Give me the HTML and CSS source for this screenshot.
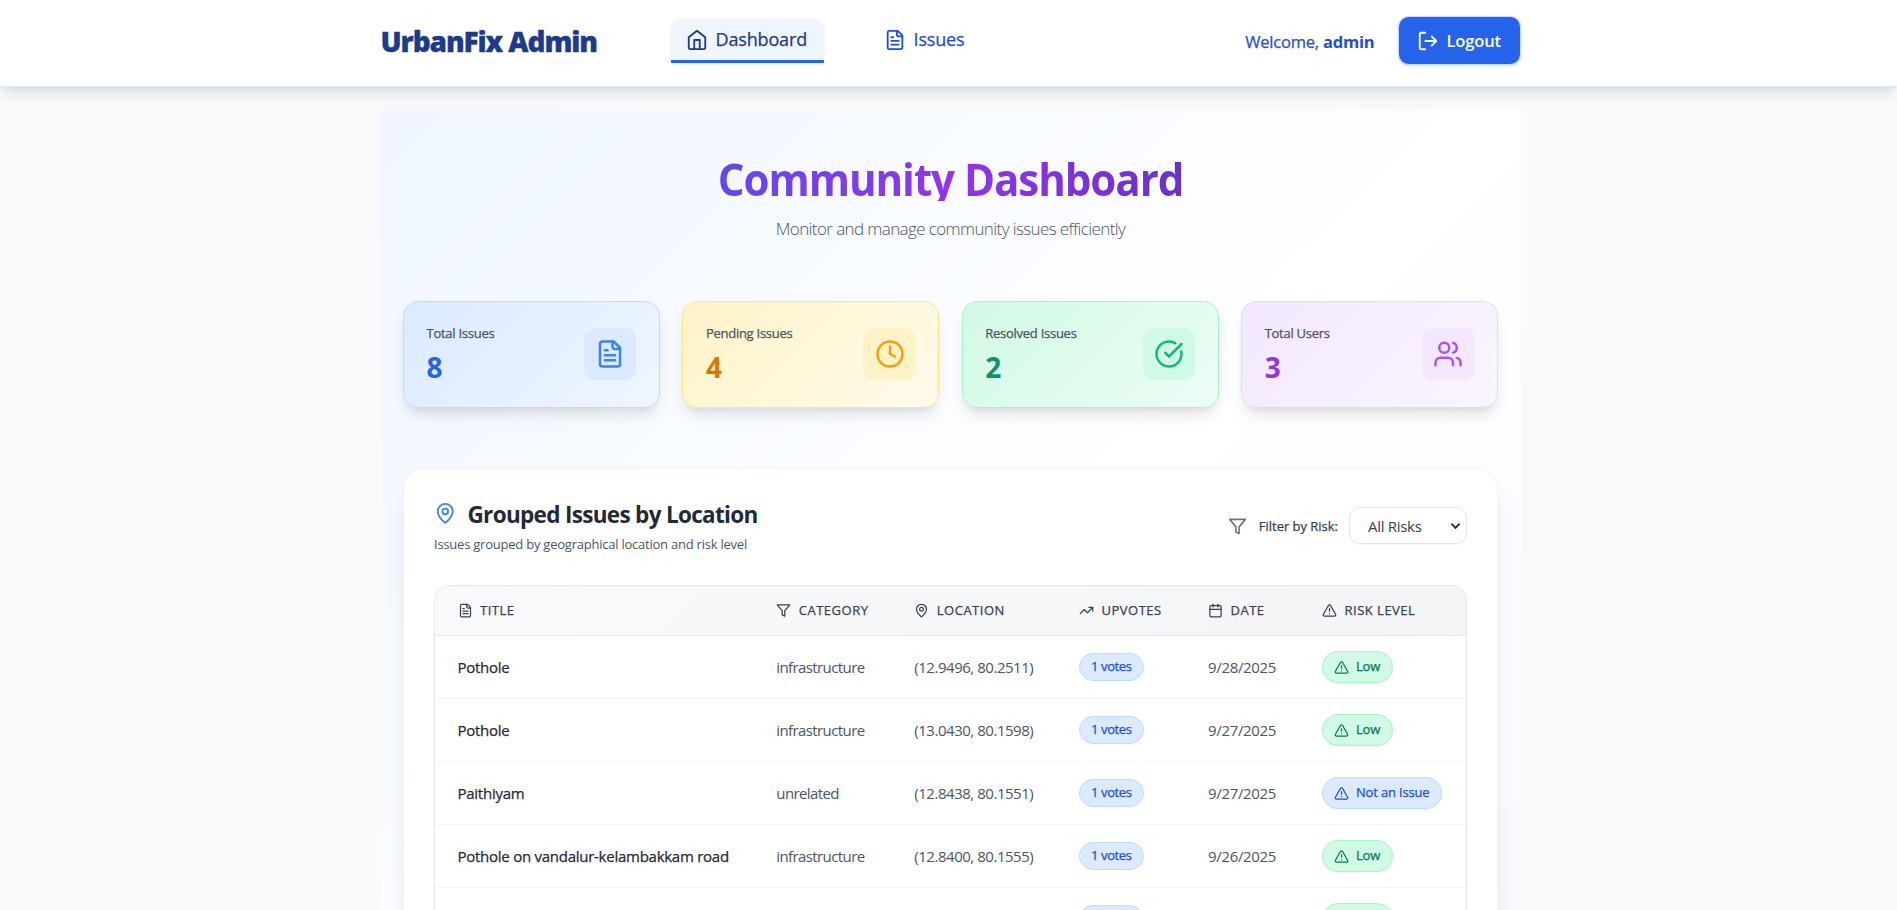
FILE: index.html
```html
<!DOCTYPE html>
<html lang="en">
<head>
<meta charset="utf-8">
<title>UrbanFix Admin</title>
<link rel="stylesheet" href="styles.css">
</head>
<body>
<svg class="defs" aria-hidden="true">
  <symbol id="file" viewBox="0 0 24 24"><path d="M15 2H6a2 2 0 0 0-2 2v16a2 2 0 0 0 2 2h12a2 2 0 0 0 2-2V7Z"/><path d="M14 2v4a2 2 0 0 0 2 2h4"/><path d="M10 9H8"/><path d="M16 13H8"/><path d="M16 17H8"/></symbol>
  <symbol id="home" viewBox="0 0 24 24"><path d="m3 9 9-7 9 7v11a2 2 0 0 1-2 2H5a2 2 0 0 1-2-2z"/><path d="M9 22V12h6v10"/></symbol>
  <symbol id="logout" viewBox="0 0 24 24"><path d="M9 21H5a2 2 0 0 1-2-2V5a2 2 0 0 1 2-2h4"/><path d="m16 17 5-5-5-5"/><path d="M21 12H9"/></symbol>
  <symbol id="clock" viewBox="0 0 24 24"><circle cx="12" cy="12" r="10"/><path d="M12 6v6l4 2"/></symbol>
  <symbol id="check" viewBox="0 0 24 24"><path d="M21.8 10A10 10 0 1 1 17 3.34"/><path d="m9 11 3 3L22 4"/></symbol>
  <symbol id="users" viewBox="0 0 24 24"><path d="M16 21v-2a4 4 0 0 0-4-4H6a4 4 0 0 0-4 4v2"/><circle cx="9" cy="7" r="4"/><path d="M22 21v-2a4 4 0 0 0-3-3.87"/><path d="M16 3.13a4 4 0 0 1 0 7.75"/></symbol>
  <symbol id="pin" viewBox="0 0 24 24"><path d="M20 10c0 5-5.54 10.19-7.4 11.8a1 1 0 0 1-1.2 0C9.54 20.19 4 15 4 10a8 8 0 0 1 16 0"/><circle cx="12" cy="10" r="3"/></symbol>
  <symbol id="filter" viewBox="0 0 24 24"><path d="M22 3H2l8 9.46V19l4 2v-8.54z"/></symbol>
  <symbol id="trend" viewBox="0 0 24 24"><path d="m22 7-8.5 8.5-5-5L2 17"/><path d="M16 7h6v6"/></symbol>
  <symbol id="calendar" viewBox="0 0 24 24"><path d="M8 2v4"/><path d="M16 2v4"/><rect x="3" y="4" width="18" height="18" rx="2"/><path d="M3 10h18"/></symbol>
  <symbol id="alert" viewBox="0 0 24 24"><path d="m21.73 18-8-14a2 2 0 0 0-3.48 0l-8 14A2 2 0 0 0 4 21h16a2 2 0 0 0 1.73-3"/><path d="M12 9v4"/><path d="M12 17h.01"/></symbol>
</svg>

<header class="topbar">
  <div class="topbar-inner">
    <span class="brand">UrbanFix Admin</span>
    <nav class="nav">
      <a class="tab active"><svg class="icon"><use href="#home"/></svg>Dashboard</a>
      <a class="tab"><svg class="icon"><use href="#file"/></svg>Issues</a>
    </nav>
    <div class="account">
      <span class="welcome">Welcome, <b>admin</b></span>
      <button class="logout"><svg class="icon"><use href="#logout"/></svg>Logout</button>
    </div>
  </div>
</header>

<main class="page">
  <h1 class="title">Community Dashboard</h1>
  <p class="subtitle">Monitor and manage community issues efficiently</p>

  <section class="stats">
    <div class="stat blue"><div><p class="label">Total Issues</p><p class="value">8</p></div><div class="badge"><svg class="icon"><use href="#file"/></svg></div></div>
    <div class="stat amber"><div><p class="label">Pending Issues</p><p class="value">4</p></div><div class="badge"><svg class="icon"><use href="#clock"/></svg></div></div>
    <div class="stat green"><div><p class="label">Resolved Issues</p><p class="value">2</p></div><div class="badge"><svg class="icon"><use href="#check"/></svg></div></div>
    <div class="stat purple"><div><p class="label">Total Users</p><p class="value">3</p></div><div class="badge"><svg class="icon"><use href="#users"/></svg></div></div>
  </section>

  <section class="panel">
    <div class="panel-head">
      <div>
        <h2 class="panel-title"><svg class="icon"><use href="#pin"/></svg>Grouped Issues by Location</h2>
        <p class="panel-sub">Issues grouped by geographical location and risk level</p>
      </div>
      <div class="filter">
        <svg class="icon"><use href="#filter"/></svg>
        <span class="filter-label">Filter by Risk:</span>
        <div class="select"><span>All Risks</span><svg class="chevron" viewBox="0 0 12 8"><path d="M1.500 1.500 6 6l4.500-4.500"/></svg></div>
      </div>
    </div>
    <div class="table">
      <div class="row head">
        <div><svg class="icon"><use href="#file"/></svg>Title</div>
        <div><svg class="icon"><use href="#filter"/></svg>Category</div>
        <div><svg class="icon"><use href="#pin"/></svg>Location</div>
        <div><svg class="icon"><use href="#trend"/></svg>Upvotes</div>
        <div><svg class="icon"><use href="#calendar"/></svg>Date</div>
        <div><svg class="icon"><use href="#alert"/></svg>Risk Level</div>
      </div>
      <div class="row"><div class="name">Pothole</div><div class="category">infrastructure</div><div class="coords">(12.9496, 80.2511)</div><div><span class="votes">1 votes</span></div><div class="date">9/28/2025</div><div><span class="risk low"><svg class="icon"><use href="#alert"/></svg>Low</span></div></div>
      <div class="row"><div class="name">Pothole</div><div class="category">infrastructure</div><div class="coords">(13.0430, 80.1598)</div><div><span class="votes">1 votes</span></div><div class="date">9/27/2025</div><div><span class="risk low"><svg class="icon"><use href="#alert"/></svg>Low</span></div></div>
      <div class="row"><div class="name">Paithiyam</div><div class="category">unrelated</div><div class="coords">(12.8438, 80.1551)</div><div><span class="votes">1 votes</span></div><div class="date">9/27/2025</div><div><span class="risk none"><svg class="icon"><use href="#alert"/></svg>Not an Issue</span></div></div>
      <div class="row"><div class="name">Pothole on vandalur-kelambakkam road</div><div class="category">infrastructure</div><div class="coords">(12.8400, 80.1555)</div><div><span class="votes">1 votes</span></div><div class="date">9/26/2025</div><div><span class="risk low"><svg class="icon"><use href="#alert"/></svg>Low</span></div></div>
      <div class="row"><div></div><div></div><div></div><div><span class="votes blank"></span></div><div></div><div><span class="risk low blank"></span></div></div>
    </div>
  </section>
</main>
</body>
</html>
```
FILE: styles.css
```css
* { box-sizing: border-box; margin: 0; padding: 0; }
html { font-size: 15px; }
body {
  height: 100vh;
  overflow: hidden;
  padding-left: 4px;
  background: #f8fafc;
  color: #4b5563;
  font-family: "Open Sans", "Noto Sans", sans-serif;
  line-height: 1.5;
}
.defs { position: absolute; width: 0; height: 0; }
.icon { flex: none; fill: none; stroke: currentColor; stroke-width: 2; stroke-linecap: round; stroke-linejoin: round; }

/* Medium weight: regular glyphs slightly thickened */
.tab, .welcome, .label, .filter-label, .head, .name, .votes, .risk { -webkit-text-stroke: .25px currentColor; }
.welcome b { -webkit-text-stroke: 0; }

.topbar {
  position: relative;
  z-index: 2;
  height: 87px;
  margin-left: -4px;
  padding: 16px 0 0 4px;
  background: #fff;
  border-bottom: 1px solid #dbeafe;
  box-shadow: 0 10px 15px -3px rgba(0,0,0,.1), 0 4px 6px -4px rgba(0,0,0,.1);
}
.topbar-inner { display: flex; align-items: center; width: 1140px; height: 50px; margin: 0 auto; }
.brand { width: 290px; font-size: 28px; font-weight: 800; letter-spacing: -1.1px; color: #1e3a8a; white-space: nowrap; -webkit-text-stroke: .3px currentColor; }
.nav { display: flex; gap: 45px; }
.tab { display: flex; align-items: center; gap: 8px; width: 153px; height: 44px; padding: 0 15px; font-size: 18px; letter-spacing: -.15px; color: #1d4ed8; border-bottom: 3px solid transparent; border-radius: 11px 11px 0 0; }
.tab .icon { width: 22px; height: 22px; }
.tab.active { color: #1e3a8a; background: #eff6ff; border-bottom-color: #2563eb; box-shadow: 0 1px 3px rgba(0,0,0,.1); }
.account { display: flex; align-items: center; gap: 23px; margin-left: auto; }
.welcome { padding-top: 2px; font-size: 16.500px; letter-spacing: -.2px; color: #1d4ed8; white-space: nowrap; }
.welcome b { font-weight: 700; }
.logout { display: flex; align-items: center; gap: 8px; width: 123px; height: 49px; margin-top: -1px; padding: 0 18px; border: 1px solid #bfdbfe; border-radius: 11px; background: #2563eb; color: #fff; font: 600 16.500px "Open Sans", sans-serif; letter-spacing: -.15px; box-shadow: 0 1px 3px rgba(0,0,0,.15); }
.logout .icon { width: 22px; height: 22px; }

.page { width: 1140px; height: 1110px; margin: 23px auto 0; padding: 46px 22.500px 0; background: linear-gradient(135deg, #eff6ff 0%, #fff 50%, #faf5ff 100%); }
.title { height: 45px; font-size: 44.500px; line-height: 45px; font-weight: 700; letter-spacing: -1.1px; text-align: center; background: linear-gradient(90deg, #2563eb, #9333ea, #3730a3); -webkit-background-clip: text; background-clip: text; color: transparent; transform: scaleX(.945); }
.subtitle { margin-top: 14px; font-size: 17px; line-height: 28px; font-weight: 300; letter-spacing: -.6px; text-align: center; color: #4b5563; }

.stats { display: grid; grid-template-columns: repeat(4, 1fr); gap: 22.500px; margin-top: 58px; }
.stat { display: flex; justify-content: space-between; align-items: center; height: 107px; padding: 0 22.500px 1px; border: 1px solid; border-radius: 15px; box-shadow: 0 10px 15px -3px rgba(0,0,0,.1), 0 4px 6px -4px rgba(0,0,0,.1); }
.label { font-size: 13px; line-height: 19px; letter-spacing: -.26px; color: #4b5563; }
.value { margin-top: 7px; font-size: 28px; line-height: 34px; font-weight: 700; }
.badge { display: grid; place-items: center; width: 52.500px; height: 52.500px; border-radius: 11px; }
.badge .icon { width: 30px; height: 30px; }
.blue { background: linear-gradient(135deg, #dbeafe, #eff6ff); border-color: #bfdbfe; }
.blue .value { color: #2563eb; }
.blue .badge { background: #dbeafe; color: #3b82f6; }
.amber { background: linear-gradient(135deg, #fef3c7, #fffbeb); border-color: #fde68a; }
.amber .value { color: #d97706; }
.amber .badge { background: #fef3c7; color: #f59e0b; }
.green { background: linear-gradient(135deg, #d1fae5, #ecfdf5); border-color: #a7f3d0; }
.green .value { color: #059669; }
.green .badge { background: #d1fae5; color: #10b981; }
.purple { background: linear-gradient(135deg, #f3e8ff, #faf5ff); border-color: #e9d5ff; }
.purple .value { color: #9333ea; }
.purple .badge { background: #f3e8ff; color: #a855f7; }

.panel { height: 740px; margin-top: 60px; padding: 31px 30px 0; background: #fff; border: 1px solid #f3f4f6; border-radius: 22px; box-shadow: 0 20px 25px -5px rgba(0,0,0,.1), 0 8px 10px -6px rgba(0,0,0,.1); }
.panel-head { display: flex; justify-content: space-between; height: 85px; }
.panel-title { display: flex; gap: 11px; font-size: 22.500px; line-height: 29px; font-weight: 700; letter-spacing: -.68px; color: #1f2937; }
.panel-title .icon { width: 22.500px; height: 22.500px; margin-top: 2px; color: #3b82f6; }
.panel-sub { margin-top: 5px; font-size: 13px; line-height: 20px; letter-spacing: -.23px; }
.filter { display: flex; align-items: center; height: 37px; margin-top: 7px; }
.filter .icon { width: 19px; height: 19px; margin-top: 1px; color: #6b7280; }
.filter-label { margin: 0 11px 0 12px; padding-top: 2px; font-size: 13px; letter-spacing: -.02px; color: #374151; }
.select { display: flex; align-items: center; justify-content: space-between; width: 118px; height: 37px; padding: 0 5px 0 18px; border: 1px solid #e5e7eb; border-radius: 11px; font-size: 15px; letter-spacing: -.3px; color: #374151; box-shadow: 0 1px 2px rgba(0,0,0,.05); }
.select span { padding-top: 2px; }
.chevron { width: 11px; height: 8px; fill: none; stroke: #1f2937; stroke-width: 2; }

.table { border: 1px solid #e5e7eb; border-radius: 15px 15px 0 0; overflow: hidden; }
.row { display: grid; grid-template-columns: 318.800px 138px 164.700px 129px 114px 1fr; align-items: center; height: 63px; border-bottom: 1px solid #f3f4f6; font-size: 15px; white-space: nowrap; }
.row > div { padding-left: 22.500px; }
.head { height: 50px; background: linear-gradient(135deg, #f9fafb, #f3f4f6); border-color: #e5e7eb; }
.head > div { display: flex; align-items: center; gap: 7.500px; font-size: 13px; letter-spacing: .5px; text-transform: uppercase; color: #374151; }
.head .icon, .risk .icon { width: 15px; height: 15px; }
.name { letter-spacing: -.26px; color: #1f2937; }
.category { letter-spacing: -.6px; }
.coords { letter-spacing: -.47px; }
.date { letter-spacing: -.33px; }
.votes, .risk { display: inline-flex; align-items: center; border: 1px solid; border-radius: 99px; font-size: 13px; vertical-align: middle; }
.votes { height: 28px; padding: 0 11.500px 0 11px; letter-spacing: -.38px; background: #dbeafe; border-color: #bfdbfe; color: #1d4ed8; }
.risk { gap: 7px; height: 32px; padding: 0 11.500px 0 11px; letter-spacing: -.17px; box-shadow: 0 1px 2px rgba(0,0,0,.05); }
.votes.blank { width: 65px; }
.risk.blank { width: 71px; }
.low { background: #d1fae5; border-color: #a7f3d0; color: #047857; }
.none { background: #dbeafe; border-color: #bfdbfe; color: #1d4ed8; }
```
